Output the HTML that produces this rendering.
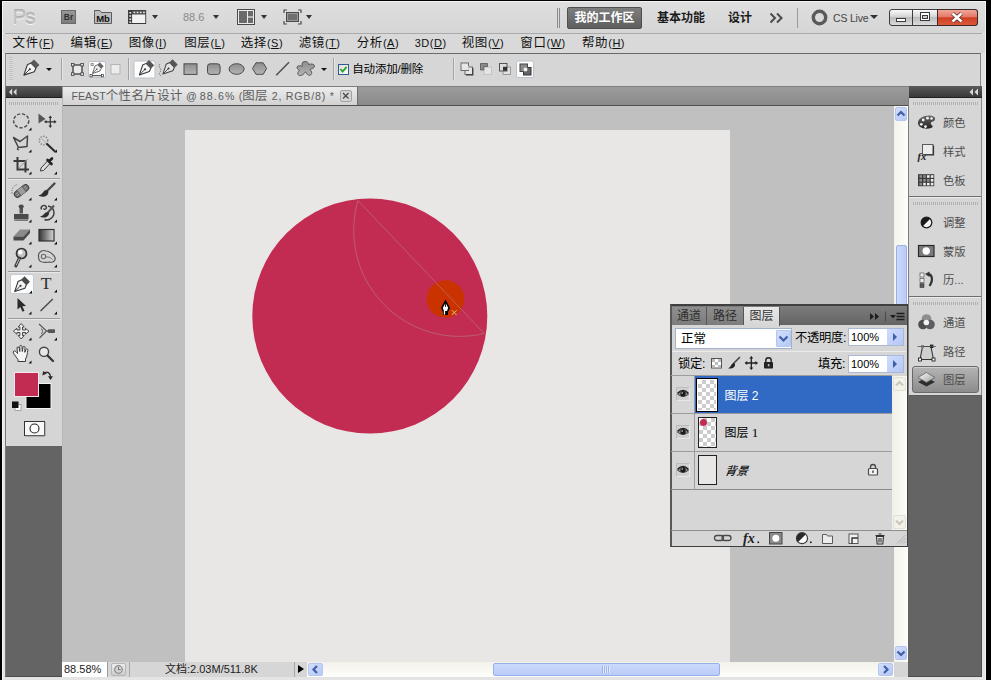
<!DOCTYPE html>
<html lang="zh-CN">
<head>
<meta charset="utf-8">
<title>Photoshop CS5 - FEAST个性名片设计</title>
<style>
html,body{margin:0;padding:0;}
body{width:991px;height:680px;overflow:hidden;background:#000;position:relative;
 font-family:"Liberation Sans","Noto Sans CJK SC",sans-serif;font-size:12px;color:#000;}
.a{position:absolute;}
#frame{left:2px;top:1px;width:984px;height:679px;background:#e4e4e4;box-sizing:border-box;border-top:1px solid #f6f6f6;border-left:1px solid #f4f4f4;border-right:1px solid #f2f2f2;}
#appbar{left:3px;top:2px;width:982px;height:31px;background:linear-gradient(#dedede,#d6d6d6);}
#appsep{left:5px;top:33px;width:977px;height:1px;background:#a9a9a9;}
#menubar{left:3px;top:34px;width:982px;height:19px;background:#d9d9d9;}
.mi{position:absolute;top:35px;height:16px;line-height:16px;font-size:12.5px;color:#111;white-space:nowrap;letter-spacing:0.6px;}
.mi u{text-decoration:underline;}
#optbar{left:5px;top:53px;width:976px;height:32px;background:#d6d6d6;border-top:1px solid #6a6a6a;border-left:1px solid #8a8a8a;border-right:1px solid #8a8a8a;box-sizing:border-box;height:33px;}
#work{left:5px;top:86px;width:977px;height:591px;background:#646464;box-sizing:border-box;border:1px solid #4e4e4e;border-top:none;border-left-color:#777;}
#tbhead{left:6px;top:86px;width:56px;height:11px;background:linear-gradient(#5a5a5a,#383838);border-bottom:1px solid #222;}
#tbbody{left:6px;top:98px;width:56px;height:348px;background:#d5d5d5;}
#tabbar{left:62px;top:86px;width:847px;height:19px;background:linear-gradient(#7e7e7e 0,#7e7e7e 1px,#9c9c9c 1px,#8a8a8a);border-bottom:1px solid #505050;box-sizing:border-box;height:20px;}
#doctab{left:63px;top:87px;width:294px;height:18px;background:linear-gradient(#ececec,#d2d2d2);border-right:1px solid #6e6e6e;font-size:12px;line-height:18px;color:#5c5c5c;white-space:nowrap;}
#paste{left:62px;top:106px;width:832px;height:556px;background:#c0c0c0;}
#canvas{left:185px;top:130px;width:545px;height:532px;background:#e8e7e5;}
#vscroll{left:894px;top:106px;width:14px;height:556px;background:linear-gradient(90deg,#f3f2ea,#fefefb);}
#status{left:62px;top:662px;width:846px;height:15px;background:#d6d6d6;}
#dockhead{left:909px;top:86px;width:73px;height:11px;background:linear-gradient(#5a5a5a,#383838);border-bottom:1px solid #222;}
#dock{left:909px;top:98px;width:73px;height:298px;background:#d6d6d6;}
.tri{width:0;height:0;border-left:3.5px solid transparent;border-right:3.5px solid transparent;border-top:4px solid #333;}
.sbtn{box-sizing:border-box;border:1px solid #b4c6f0;border-radius:2px;background:linear-gradient(135deg,#d2defc,#b6c8f6);}
.ptab{top:307px;height:18px;line-height:19px;text-align:center;font-size:12px;color:#2e2e2e;background:linear-gradient(#8f8f8f,#7c7c7c);border-right:1px solid #555;box-sizing:content-box;}
.ml{font-size:11px;letter-spacing:0.5px;}
</style>
</head>
<body>
<div class="a" id="frame"></div>
<div class="a" id="appbar"></div>
<div class="a" id="appsep"></div>
<div class="a" id="menubar"></div>
<div class="a" id="optbar"></div>
<div class="a" id="work"></div>
<div class="a" id="tbhead"></div>
<div class="a" id="tbbody"></div>
<div class="a" id="tabbar"></div>
<div class="a" id="doctab"><span id="tabtxt" style="position:absolute;left:8.500px;top:0;font-size:10.600px;"><span id="t1">FEAST</span><span id="t2" style="font-size:12.400px;letter-spacing:0.500px">个性名片设计</span><span id="t3"> @ </span><span id="t4" style="letter-spacing:1.200px">88.6%</span><span id="t5"> (</span><span style="font-size:12.400px;letter-spacing:0.500px">图层</span><span id="t6" style="letter-spacing:0.800px"> 2, RGB/8) *</span></span><span style="position:absolute;left:277.300px;top:3.300px;width:11.500px;height:11.500px;box-sizing:border-box;border:1px solid #a4a4a4;border-radius:2px;background:#d4d4d4;"></span><svg style="position:absolute;left:277.300px;top:3.300px" width="11.500" height="11.500" viewBox="0 0 11.500 11.500"><path d="M3 3 L8.500 8.500 M8.500 3 L3 8.500" stroke="#444" stroke-width="1.100"/></svg></div>
<div class="a" id="paste"></div>
<div class="a" id="canvas"></div>
<div class="a" id="vscroll"></div>
<div class="a" id="status"></div>
<div class="a" id="dockhead"></div>
<div class="a" id="dock"></div>
<svg class="a" style="left:185px;top:130px" width="545" height="532" viewBox="185 130 545 532">
<circle cx="369.8" cy="316.1" r="117.5" fill="#c32c52"/>
<circle cx="445.4" cy="299" r="18.8" fill="#ca3300"/>
<path d="M358 200.5 L484.2 333.5" fill="none" stroke="#b8707f" stroke-width="1" opacity="0.7"/>
<path d="M358 200.5 A106 106 0 0 0 484.2 333.5" fill="none" stroke="#b8707f" stroke-width="1" opacity="0.7"/>
<g id="pencur">
<path d="M445.5 299.4 L441 307.8 L442.6 311.6 L443 311.6 L443 315 L448 315 L448 311.6 L448.4 311.6 L450 307.8 Z" fill="#000"/>
<path d="M445.5 303 L442.8 307.8 L444 311 L444.8 311 L447 311 L448.2 307.8 Z" fill="#fff"/>
<path d="M445.5 300 L445.5 307" stroke="#000" stroke-width="0.8"/>
<rect x="443.8" y="311" width="1.3" height="3.6" fill="#fff"/>
<path d="M451.8 310.2 L456.6 315 M456.6 310.2 L451.8 315" stroke="#e2c08f" stroke-width="1" fill="none"/>
</g>
</svg>
<!--ARTWORK-->
<div class="a" style="left:12.500px;top:4px;font-size:20.500px;line-height:26px;color:#c0c0c0;text-shadow:0 1px 0 #f6f6f6,0 -1px 0 #adadad;letter-spacing:-1px;">Ps</div>
<div class="a" style="left:61px;top:10px;width:15px;height:14px;background:linear-gradient(#979797,#7c7c7c);border:1px solid #6a6a6a;box-sizing:border-box;font-size:8.5px;line-height:12px;text-align:center;color:#333;font-weight:bold;">Br</div>
<svg class="a" style="left:93px;top:9px" width="20" height="16" viewBox="0 0 20 16"><path d="M1.5 3.5 L1.5 1.5 L7 1.5 L8.5 3.5 L18.5 3.5 L18.5 14.5 L1.5 14.5 Z" fill="#bdbdbd" stroke="#5c5c5c" stroke-width="1"/><text x="10" y="12.5" font-size="9.5" font-weight="bold" text-anchor="middle" fill="#111" font-family="Liberation Sans, sans-serif">Mb</text></svg>
<svg class="a" style="left:128px;top:10px" width="20" height="15" viewBox="0 0 22 15" preserveAspectRatio="none"><rect x="0.5" y="0.5" width="19" height="13" fill="#f2f2f2" stroke="#3a3a3a"/><rect x="0.5" y="0.5" width="19" height="4" fill="#4a4a4a"/><rect x="0.5" y="0.5" width="4" height="13" fill="#3a3a3a"/><g fill="#e0e0e0"><rect x="1.5" y="2" width="2" height="1.6"/><rect x="1.5" y="5.2" width="2" height="1.6"/><rect x="1.5" y="8.4" width="2" height="1.6"/><rect x="1.5" y="11.4" width="2" height="1.6"/><rect x="6" y="1.6" width="2" height="1.6"/><rect x="9.5" y="1.6" width="2" height="1.6"/><rect x="13" y="1.6" width="2" height="1.6"/><rect x="16.5" y="1.6" width="2" height="1.6"/></g></svg>
<div class="a tri" style="left:152px;top:15px;"></div>
<div class="a" style="left:183px;top:10px;font-size:11px;line-height:14px;color:#8a8a8a;">88.6</div>
<div class="a tri" style="left:213px;top:15px;"></div>
<svg class="a" style="left:237px;top:9px" width="18" height="16" viewBox="0 0 18 16"><rect x="0.5" y="0.5" width="17" height="15" fill="#ececec" stroke="#4a4a4a"/><rect x="2" y="2" width="8" height="12" fill="#6a6a6a"/><rect x="11" y="2" width="5" height="5.4" fill="#6a6a6a"/><rect x="11" y="8.6" width="5" height="5.4" fill="#6a6a6a"/></svg>
<div class="a tri" style="left:261px;top:15px;"></div>
<svg class="a" style="left:283px;top:9px" width="19" height="16" viewBox="0 0 19 16"><path d="M1 4 V1 H4 M15 1 H18 V4 M18 12 V15 H15 M4 15 H1 V12" fill="none" stroke="#4a4a4a" stroke-width="1.2"/><rect x="3.5" y="3.5" width="12" height="9" fill="#9a9a9a" stroke="#4a4a4a"/><rect x="5" y="5" width="9" height="6" fill="#6e6e6e"/></svg>
<div class="a tri" style="left:306px;top:15px;"></div>
<div class="a" style="left:557px;top:8px;width:1px;height:20px;background:#8c8c8c;"></div>
<div class="a" style="left:559px;top:8px;width:1px;height:20px;background:#8c8c8c;"></div>
<div class="a" style="left:567px;top:7px;width:75px;height:22px;box-sizing:border-box;border:1px solid #4e4e4e;border-radius:2px;background:linear-gradient(#7e7e7e,#5e5e5e);color:#fff;font-weight:bold;font-size:12px;line-height:20px;text-align:center;letter-spacing:0;">我的工作区</div>
<div class="a" style="left:657px;top:8px;font-weight:bold;font-size:12px;line-height:20px;color:#1a1a1a;">基本功能</div>
<div class="a" style="left:728px;top:8px;font-weight:bold;font-size:12px;line-height:20px;color:#1a1a1a;">设计</div>
<svg class="a" style="left:769px;top:12px" width="16" height="12" viewBox="0 0 16 12"><path d="M1.5 1.5 L6 6 L1.5 10.5 M8 1.5 L12.500 6 L8 10.5" fill="none" stroke="#4a4a4a" stroke-width="2"/></svg>
<div class="a" style="left:797px;top:8px;width:1px;height:20px;background:#9a9a9a;"></div>
<svg class="a" style="left:811px;top:9px" width="18" height="18" viewBox="0 0 18 18"><circle cx="8.500" cy="8.500" r="6.2" fill="none" stroke="#5a5a5a" stroke-width="3.4"/></svg>
<div class="a" style="left:833px;top:9px;font-size:10.5px;line-height:18px;color:#444;letter-spacing:-0.2px;">CS Live</div>
<div class="a tri" style="left:870px;top:15px;border-left-width:4px;border-right-width:4px;"></div>
<div class="a" style="left:889px;top:9px;width:89px;height:17px;box-sizing:border-box;border:1px solid #3c3c3c;border-radius:3px;background:linear-gradient(#fafafa,#d4d4d4 45%,#bcbcbc 50%,#dcdcdc);"></div>
<div class="a" style="left:912px;top:9px;width:1px;height:17px;background:#3c3c3c;"></div>
<div class="a" style="left:937px;top:9px;width:41px;height:17px;box-sizing:border-box;border:1px solid #3c2a26;border-radius:0 3px 3px 0;background:linear-gradient(#f0a59a,#e57a68 45%,#cf3e22 52%,#dd5a3c);"></div>
<div class="a" style="left:896px;top:18px;width:10px;height:4px;box-sizing:border-box;border:1px solid #3a3a3a;background:#fff;"></div>
<div class="a" style="left:920px;top:12px;width:10px;height:9px;box-sizing:border-box;border:1px solid #3a3a3a;background:#fff;"></div>
<div class="a" style="left:922px;top:15px;width:6px;height:4px;box-sizing:border-box;border:1px solid #3a3a3a;background:#ccc;"></div>
<svg class="a" style="left:950px;top:11px" width="14" height="13" viewBox="0 0 14 13"><path d="M2.500 2.500 L11.500 10.500 M11.500 2.500 L2.500 10.500" stroke="#5a2a20" stroke-width="4.2" fill="none"/><path d="M2.500 2.500 L11.500 10.500 M11.500 2.500 L2.500 10.500" stroke="#fff" stroke-width="2.600" fill="none"/></svg>
<!--APPBAR-->
<div class="mi" style="left:12.6px">文件<span class="ml">(<u>F</u>)</span></div>
<div class="mi" style="left:70.6px">编辑<span class="ml">(<u>E</u>)</span></div>
<div class="mi" style="left:128.7px">图像<span class="ml">(<u>I</u>)</span></div>
<div class="mi" style="left:184.2px">图层<span class="ml">(<u>L</u>)</span></div>
<div class="mi" style="left:240.7px">选择<span class="ml">(<u>S</u>)</span></div>
<div class="mi" style="left:298.7px">滤镜<span class="ml">(<u>T</u>)</span></div>
<div class="mi" style="left:356.7px">分析<span class="ml">(<u>A</u>)</span></div>
<div class="mi" style="left:414.7px"><span class="ml">3D(<u>D</u>)</span></div>
<div class="mi" style="left:461.7px">视图<span class="ml">(<u>V</u>)</span></div>
<div class="mi" style="left:520.3px">窗口<span class="ml">(<u>W</u>)</span></div>
<div class="mi" style="left:582px">帮助<span class="ml">(<u>H</u>)</span></div>
<!--MENU-->
<div class="a" style="left:9px;top:57px;width:4px;height:24px;background:repeating-linear-gradient(#bcbcbc 0 1px,#dedede 1px 2px);opacity:.8"></div>
<svg class="a" style="left:18px;top:56px" width="26" height="26" viewBox="18 56 26 26"><g transform="translate(30.8 68.2) rotate(45) scale(1.0)"><path d="M0 9.800 L-4.900 0 L-3.500 -3.800 L3.500 -3.800 L4.900 0 Z" fill="#f4f4f4" stroke="#3a3a3a" stroke-width="1.100" stroke-linejoin="round"/><path d="M0 9 L0 2" stroke="#3a3a3a" stroke-width="0.900"/><circle cx="0" cy="1.400" r="1.100" fill="#3a3a3a"/><rect x="-3.900" y="-8.300" width="7.800" height="4.600" fill="#5a5a5a"/></g></svg>
<div class="a tri" style="left:46px;top:68px;border-left-width:3px;border-right-width:3px;border-top-width:3.5px;border-top-color:#111"></div>
<div class="a" style="left:61px;top:58px;width:1px;height:22px;background:#a2a2a2;"></div><div class="a" style="left:62px;top:58px;width:1px;height:22px;background:#e6e6e6;"></div>
<svg class="a" style="left:69px;top:60px" width="54" height="20" viewBox="69 60 54 20">
<rect x="73" y="65" width="9" height="9" fill="#e9e9e9" stroke="#3c3c3c" stroke-width="1.300"/>
<g fill="#e8e8e8" stroke="#3c3c3c" stroke-width="0.800"><rect x="71.400" y="63.400" width="2.600" height="2.600"/><rect x="80.800" y="63.400" width="2.600" height="2.600"/><rect x="71.400" y="72.800" width="2.600" height="2.600"/><rect x="80.800" y="72.800" width="2.600" height="2.600"/></g>
<rect x="88.500" y="61.500" width="17" height="16" rx="1.500" fill="#fdfdfd" stroke="#b9c3cf" stroke-width="1"/>
<g transform="translate(97.5 68.5) rotate(45) scale(0.72)"><path d="M0 9.800 L-4.900 0 L-3.500 -3.800 L3.500 -3.800 L4.900 0 Z" fill="#eee" stroke="#555" stroke-width="1.100" stroke-linejoin="round"/><path d="M0 9 L0 2" stroke="#555" stroke-width="0.900"/><circle cx="0" cy="1.400" r="1.100" fill="#555"/><rect x="-3.900" y="-8.300" width="7.800" height="4.600" fill="#666"/></g>
<path d="M91 75.700 H102.500" stroke="#333" stroke-width="1"/><rect x="90" y="74.600" width="2.200" height="2.200" fill="#fff" stroke="#333" stroke-width="0.700"/><rect x="101.400" y="74.600" width="2.200" height="2.200" fill="#fff" stroke="#333" stroke-width="0.700"/><rect x="91" y="63.500" width="2.200" height="2.200" fill="#ddd" stroke="#777" stroke-width="0.700"/>
<rect x="111" y="64.500" width="9" height="9.500" fill="#ececec" stroke="#b4b4b4" stroke-width="1"/>
</svg>
<div class="a" style="left:128px;top:58px;width:1px;height:22px;background:#a2a2a2;"></div><div class="a" style="left:129px;top:58px;width:1px;height:22px;background:#e6e6e6;"></div>
<svg class="a" style="left:132px;top:58px" width="200" height="22" viewBox="132 58 200 22">
<defs><linearGradient id="gsh" x1="0" y1="0" x2="0" y2="1"><stop offset="0" stop-color="#8e8e8e"/><stop offset="1" stop-color="#b4b4b4"/></linearGradient></defs>
<rect x="134" y="61" width="21" height="17" rx="1.500" fill="#fdfdfd" stroke="#b9c3cf" stroke-width="1"/>
<g transform="translate(146 68.3) rotate(45) scale(0.95)"><path d="M0 9.800 L-4.900 0 L-3.500 -3.800 L3.500 -3.800 L4.900 0 Z" fill="#f6f6f6" stroke="#333" stroke-width="1.100" stroke-linejoin="round"/><path d="M0 9 L0 2" stroke="#333" stroke-width="0.900"/><circle cx="0" cy="1.400" r="1.100" fill="#333"/><rect x="-3.900" y="-8.300" width="7.800" height="4.600" fill="#555"/></g><g transform="translate(169.5 67.5) rotate(45) scale(0.95)"><path d="M0 9.800 L-4.900 0 L-3.500 -3.800 L3.500 -3.800 L4.900 0 Z" fill="#e4e4e4" stroke="#444" stroke-width="1.100" stroke-linejoin="round"/><path d="M0 9 L0 2" stroke="#444" stroke-width="0.900"/><circle cx="0" cy="1.400" r="1.100" fill="#444"/><rect x="-3.900" y="-8.300" width="7.800" height="4.600" fill="#555"/></g>
<path d="M160 64 q-2 2 0 4 q2 2 0 4 q-1.500 2 1 4" fill="none" stroke="#666" stroke-width="0.900" stroke-dasharray="1.500 1"/>
<rect x="184" y="63.800" width="13" height="10.600" fill="url(#gsh)" stroke="#4a4a4a" stroke-width="1"/>
<rect x="207.500" y="63.800" width="12.600" height="10.600" rx="2.600" fill="url(#gsh)" stroke="#4a4a4a" stroke-width="1"/>
<ellipse cx="236.600" cy="69" rx="7.500" ry="5.300" fill="url(#gsh)" stroke="#4a4a4a" stroke-width="1"/>
<path d="M252.500 68.500 L256 62.800 L263.200 62.800 L266.600 68.500 L263.200 74.300 L256 74.300 Z" fill="url(#gsh)" stroke="#4a4a4a" stroke-width="1"/>
<path d="M276.200 75.300 L289 62.300" stroke="#4e4e4e" stroke-width="1.500"/>
<path d="M303 62 C306 60.500 309 62.500 308.500 64.500 C311 63.500 314.500 64 314.500 66 C314.500 68.500 311.500 68.500 310 69.500 C312 71.500 312.500 74.500 310 75.200 C307.500 75.800 306.500 73 305.500 71.800 C304.500 73.500 302 76 299.500 75.500 C297 74.800 297.500 72 299.500 70.200 C298 69.500 296.500 68.500 297.200 66.800 C298 65.200 301 65.800 302.500 66.200 C302 64.800 301.800 63 303 62 Z" fill="url(#gsh)" stroke="#5a5a5a" stroke-width="1"/>
</svg>
<div class="a tri" style="left:320.500px;top:67.500px;border-left-width:3px;border-right-width:3px;border-top-width:3.500px;border-top-color:#111"></div>
<div class="a" style="left:333px;top:58px;width:1px;height:22px;background:#a2a2a2;"></div><div class="a" style="left:334px;top:58px;width:1px;height:22px;background:#e6e6e6;"></div>
<div class="a" style="left:338px;top:64px;width:11px;height:11px;box-sizing:border-box;border:1px solid #2f5a93;background:linear-gradient(135deg,#dcdcd6,#fff);"></div>
<svg class="a" style="left:338px;top:64px" width="11" height="11" viewBox="0 0 11 11"><path d="M2.500 5 L4.600 7.600 L8.600 2.800" fill="none" stroke="#2aa12a" stroke-width="1.800"/></svg>
<div class="a" style="left:352.300px;top:61px;font-size:11.500px;line-height:16px;color:#000;white-space:nowrap;letter-spacing:-0.200px;">自动添加/删除</div>
<div class="a" style="left:453px;top:58px;width:1px;height:22px;background:#a2a2a2;"></div><div class="a" style="left:454px;top:58px;width:1px;height:22px;background:#e6e6e6;"></div>
<svg class="a" style="left:458px;top:58px" width="80" height="22" viewBox="458 58 80 22">
<g stroke="#6a6a6a" stroke-width="1" fill="#e6e6e6"><rect x="465" y="67" width="7.500" height="7.500"/><rect x="461" y="63" width="7.500" height="7.500"/><path d="M465.500 67 H468 V70" stroke="#e6e6e6" stroke-width="1.500" fill="none"/></g>
<path d="M472.800 68 V74.800 H466" fill="none" stroke="#3a3a3a" stroke-width="1.200"/>
<rect x="484" y="67" width="7.500" height="7.500" fill="#e4e4e4" stroke="#c4c4c4"/><path d="M480.500 70 V63.500 H487.500 V66.500 H483.800 V70 Z" fill="#8a8a8a" stroke="#555" stroke-width="0.800"/>
<rect x="503" y="67" width="7.500" height="7.500" fill="#e2e2e2" stroke="#9a9a9a"/><rect x="499.500" y="63.500" width="7.500" height="7.500" fill="#dcdcdc" stroke="#555"/><rect x="503" y="66.800" width="4" height="4" fill="#333"/>
<rect x="516.500" y="61" width="17" height="16.500" rx="1.500" fill="#fdfdfd" stroke="#b9c3cf" stroke-width="1"/>
<rect x="523.500" y="67.500" width="7.500" height="7.500" fill="#666" stroke="#333"/><rect x="520" y="64" width="7.500" height="7.500" fill="#8a8a8a" stroke="#444"/><rect x="523.800" y="67.800" width="3.600" height="3.600" fill="#f0f0f0"/>
</svg>
<!--OPTIONS-->
<svg class="a" style="left:8px;top:88px" width="10" height="8" viewBox="0 0 10 8"><path d="M4.200 0.500 L1 4 L4.200 7.500 Z M8.500 0.500 L5.300 4 L8.500 7.500 Z" fill="#d8d8d8"/></svg>
<div class="a" style="left:9px;top:102px;width:49px;height:3px;background-image:linear-gradient(90deg,#a4a4a4 1px,transparent 1px);background-size:2px 1px;opacity:.75"></div>
<div class="a" style="left:8px;top:178px;width:52px;height:1px;background:#9a9a9a;"></div><div class="a" style="left:8px;top:179px;width:52px;height:1px;background:#e8e8e8;"></div>
<div class="a" style="left:8px;top:271px;width:52px;height:1px;background:#9a9a9a;"></div><div class="a" style="left:8px;top:272px;width:52px;height:1px;background:#e8e8e8;"></div>
<div class="a" style="left:8px;top:318px;width:52px;height:1px;background:#9a9a9a;"></div><div class="a" style="left:8px;top:319px;width:52px;height:1px;background:#e8e8e8;"></div>
<div class="a" style="left:62px;top:98px;width:1px;height:348px;background:#b6b6b6;"></div>
<div class="a" style="left:9.500px;top:273.500px;width:24px;height:20.500px;box-sizing:border-box;border:1px solid #c4ccd6;border-radius:2px;background:#fdfdfd;"></div>
<svg class="a" style="left:5px;top:98px" width="57" height="348" viewBox="5 98 57 348">
<defs><linearGradient id="tg1" x1="0" y1="0" x2="1" y2="0"><stop offset="0" stop-color="#333"/><stop offset="1" stop-color="#d8d8d8"/></linearGradient>
<linearGradient id="tg2" x1="0" y1="0" x2="0" y2="1"><stop offset="0" stop-color="#9a9a9a"/><stop offset="1" stop-color="#444"/></linearGradient></defs>
<!-- elliptical marquee -->
<ellipse cx="21.200" cy="120.800" rx="7.600" ry="7" fill="none" stroke="#4a4a4a" stroke-width="1.400" stroke-dasharray="3.200 1.800"/>
<!-- move -->
<path d="M38.500 113.500 L38.500 123.500 L45.500 119 Z" fill="#555"/><path d="M50.300 116.500 V127 M45 121.800 H55.600" stroke="#333" stroke-width="1.200"/><path d="M50.300 115.500 L48.500 118 H52.100 Z M50.300 128 L48.500 125.500 H52.100 Z M44 121.800 L46.500 120 V123.600 Z M56.600 121.800 L54.100 120 V123.600 Z" fill="#333"/>
<!-- polygonal lasso -->
<path d="M13.500 137.500 L20 141.500 L27.500 136 L27 146.500 L18.500 147.500 Z" fill="none" stroke="#444" stroke-width="1.500" stroke-linejoin="round"/><path d="M18.500 147.500 C16.500 148.500 17.500 150.500 19 149.500" fill="none" stroke="#444" stroke-width="1.200"/>
<!-- magic wand -->
<circle cx="43.500" cy="140.500" r="4.200" fill="none" stroke="#8a8a8a" stroke-width="1.600" stroke-dasharray="1.400 1.300"/><path d="M46.500 143.500 L55 151.500" stroke="#2a2a2a" stroke-width="2.200"/><path d="M41.500 138.500 L45.500 142.500" stroke="#bbb" stroke-width="1.200"/>
<!-- crop -->
<path d="M17.500 157 V169.500 H29 M13.500 161 H25.500 V172.500" fill="none" stroke="#3a3a3a" stroke-width="2"/><path d="M19 168 L27.500 159" stroke="#999" stroke-width="1"/>
<!-- eyedropper -->
<path d="M40.500 171 L41 168 L48 160.500 L50.500 163 L43.500 170.500 Z" fill="#ddd" stroke="#3a3a3a" stroke-width="1"/><path d="M47.500 160 L51.500 164 M49 161.500 L52 158.500" stroke="#222" stroke-width="2.600" stroke-linecap="round"/>
<!-- healing brush -->
<g transform="translate(21.500 191) rotate(-38)"><rect x="-8.500" y="-3.300" width="17" height="6.600" rx="3.300" fill="#6a6a6a" stroke="#3a3a3a" stroke-width="0.800"/><rect x="-2.800" y="-3.300" width="5.600" height="6.600" fill="#9c9c9c"/><path d="M-6.500 -1 H-4 M-6.500 1 H-4 M4 -1 H6.500 M4 1 H6.500" stroke="#ccc" stroke-width="0.700"/></g><path d="M12 193.500 C11.500 188.500 13.500 185.500 17.500 184.500" fill="none" stroke="#777" stroke-width="1" stroke-dasharray="1.200 1.200"/>
<!-- brush -->
<path d="M54.500 183.500 L46 192" stroke="#4a4a4a" stroke-width="2.400" stroke-linecap="round"/><path d="M47.500 190 C49.500 192 48 196 44.500 196.500 C42 197 39.500 196.500 38.500 195.500 C41.500 195 43 192.500 44.500 190.500 Z" fill="#2e2e2e"/>
<!-- stamp -->
<path d="M19.500 206 H23 V213.500 H19.500 Z" fill="#555"/><ellipse cx="21.200" cy="206.500" rx="2.600" ry="2" fill="#4a4a4a"/><path d="M14 214 H28.500 V219.500 H14 Z" fill="#4a4a4a"/><path d="M14.500 220.500 H28" stroke="#777" stroke-width="1"/>
<!-- history brush -->
<path d="M41.500 209.500 C40 206.500 44 204 46 206.500 C47.500 208.500 44.500 210.500 43.500 208.500 M48 206 C54 207 56 214 51.500 218 C49.500 219.800 46.500 220.300 44.500 219.500" fill="none" stroke="#3a3a3a" stroke-width="1.400"/><path d="M54 205.500 L47.500 213" stroke="#555" stroke-width="2"/><path d="M48.500 212 C50 214 48 217 45 217.500 C43 217.800 41 217.300 40 216.500 C42.500 216 44 214 45.500 212.500 Z" fill="#2e2e2e"/>
<!-- eraser -->
<path d="M13.500 236.500 L20 229.500 L30 229.500 L23.500 236.500 Z" fill="#8a8a8a"/><path d="M13.500 236.500 L23.500 236.500 L30 229.500 L30 233 L23.500 240.500 L13.500 240.500 Z" fill="#4a4a4a"/>
<!-- gradient -->
<rect x="39" y="229.500" width="15" height="11.500" fill="url(#tg1)" stroke="#333" stroke-width="1.200"/>
<!-- dodge -->
<circle cx="21.500" cy="253.500" r="5" fill="#c2c2c2" stroke="#333" stroke-width="1.700"/><circle cx="20.300" cy="252.200" r="2.300" fill="#fafafa"/><path d="M19.500 258 L15.800 266" stroke="#3c3c3c" stroke-width="3" stroke-linecap="round"/><path d="M19.300 258.600 L16.200 265.300" stroke="#cfcfcf" stroke-width="0.900"/>
<!-- sponge -->
<path d="M38.500 256 C38 252 42.500 249.500 46 251 C49.500 251 53.500 254.500 55 257.500 C56 260.500 53 263 50 262 C46 262.500 41.500 263 39.500 260.500 C38.500 259.500 38.500 257.500 38.500 256 Z" fill="#d4d4d4" stroke="#555" stroke-width="1.200"/><circle cx="43.500" cy="256.500" r="2.200" fill="none" stroke="#666" stroke-width="1.100"/><path d="M46 257 C49 256.500 51 258 52.500 259.500" fill="none" stroke="#777" stroke-width="1"/>
<!-- pen (selected) -->
<g transform="translate(21.500 284.800) rotate(45) scale(0.98)"><path d="M0 9.800 L-4.900 0 L-3.500 -3.800 L3.500 -3.800 L4.900 0 Z" fill="#f2f2f2" stroke="#333" stroke-width="1.100" stroke-linejoin="round"/><path d="M0 9 L0 2" stroke="#333" stroke-width="0.900"/><circle cx="0" cy="1.400" r="1.100" fill="#333"/><rect x="-3.900" y="-8.300" width="7.800" height="4.600" fill="#4a4a4a"/></g>
<!-- type -->
<text x="46.200" y="288.600" font-family="Liberation Serif, serif" font-size="17.500" text-anchor="middle" fill="#2e2e2e">T</text>
<!-- path selection arrow -->
<path d="M17.500 298 L17.500 309.500 L20.300 307 L22.500 311.800 L24.500 310.800 L22.300 306.200 L26 306 Z" fill="#2a2a2a"/>
<!-- line -->
<path d="M40.500 311 L52.800 299" stroke="#4e4e4e" stroke-width="1.500"/>
<!-- 3d object rotate (4 arrows outline) -->
<path d="M21.200 323.500 L24.200 327 H22.500 V330 H25.500 V328.300 L29 331.200 L25.500 334.200 V332.500 H22.500 V335.500 H24.200 L21.200 339 L18.200 335.500 H19.900 V332.500 H16.900 V334.200 L13.400 331.200 L16.900 328.300 V330 H19.900 V327 H18.200 Z" fill="#f0f0f0" stroke="#444" stroke-width="1"/>
<!-- 3d camera -->
<path d="M39 324 L46.500 331 L39.500 338" fill="none" stroke="#555" stroke-width="1.100"/><path d="M41 328.500 C43 330 43 332.500 41 334" fill="none" stroke="#555" stroke-width="1"/><rect x="48" y="329.300" width="7" height="3.600" rx="0.800" fill="#555"/><path d="M46.500 331.100 H49" stroke="#555" stroke-width="1.600"/>
<!-- hand -->
<path d="M15.500 356 C13.500 353.500 12.500 352 13.800 351 C15.200 350.300 16.500 352 17.500 353.500 L17 348 C17 346.500 19 346.500 19.200 348 L19.800 351.500 L19.800 346.500 C19.800 345 21.800 345 22 346.500 L22.300 351.500 L23 347.300 C23.300 345.900 25.200 346.200 25 347.600 L24.800 352.300 L26 349.500 C26.600 348.300 28.300 349 27.800 350.300 C27 353 27.500 356.500 25.500 359 L25.500 361.500 H18 L18 359.500 C17 358.500 16.300 357.200 15.500 356 Z" fill="#f4f4f4" stroke="#3a3a3a" stroke-width="1" stroke-linejoin="round"/>
<!-- zoom -->
<circle cx="44" cy="351.800" r="4.600" fill="#e8e8e8" stroke="#444" stroke-width="1.400"/><path d="M47.500 355.500 L53 361" stroke="#333" stroke-width="2.200" stroke-linecap="round"/>
<!-- corner triangles -->
<path d="M31.5 127.5 V130.5 H28.5 Z" fill="#111"/><path d="M31.5 149.5 V152.5 H28.5 Z" fill="#111"/><path d="M57 149.5 V152.5 H54 Z" fill="#111"/><path d="M31.5 171.5 V174.5 H28.5 Z" fill="#111"/><path d="M57 171.5 V174.5 H54 Z" fill="#111"/><path d="M31.5 197.5 V200.5 H28.5 Z" fill="#111"/><path d="M57 197.5 V200.5 H54 Z" fill="#111"/><path d="M31.5 219.5 V222.5 H28.5 Z" fill="#111"/><path d="M57 219.5 V222.5 H54 Z" fill="#111"/><path d="M31.5 241.5 V244.5 H28.5 Z" fill="#111"/><path d="M57 241.5 V244.5 H54 Z" fill="#111"/><path d="M31.5 264.5 V267.5 H28.5 Z" fill="#111"/><path d="M57 264.5 V267.5 H54 Z" fill="#111"/><path d="M32 290.5 V293.5 H29 Z" fill="#111"/><path d="M57 289.5 V292.5 H54 Z" fill="#111"/><path d="M31.5 311.5 V314.5 H28.5 Z" fill="#111"/><path d="M57 311.5 V314.5 H54 Z" fill="#111"/><path d="M31.5 337.5 V340.5 H28.5 Z" fill="#111"/><path d="M57 337.5 V340.5 H54 Z" fill="#111"/><path d="M31.5 360.5 V363.5 H28.5 Z" fill="#111"/>
<!-- swap arrows -->
<path d="M44 373.500 C47 370.500 50.500 373 50.500 377" fill="none" stroke="#2a2a2a" stroke-width="1.300"/><path d="M42.300 375.500 L43.200 371 L47 373.500 Z M48 376.300 H53 L50.500 380 Z" fill="#2a2a2a"/>
<!-- background / foreground -->
<rect x="26" y="383.500" width="25" height="25" fill="#000" stroke="#f2f2f2" stroke-width="1"/>
<rect x="14.500" y="372.500" width="24" height="24" fill="#c32c52" stroke="#f6e6ea" stroke-width="1"/>
<!-- default colors -->
<rect x="15" y="404.500" width="6" height="6" fill="#fff" stroke="#777" stroke-width="0.600"/><rect x="12" y="401.500" width="6.500" height="6.500" fill="#111"/>
<!-- quick mask -->
<rect x="24.500" y="421.500" width="20" height="14" fill="#f8f8f8" stroke="#333" stroke-width="1"/><path d="M25 436 H45 V422" fill="none" stroke="#888" stroke-width="1"/><circle cx="34.500" cy="428.500" r="4.500" fill="#fff" stroke="#222" stroke-width="1.100"/>
</svg>
<!--TOOLS-->
<div class="a" style="left:908px;top:98px;width:1px;height:298px;background:#7c7c7c;"></div><div class="a" style="left:981px;top:98px;width:1px;height:298px;background:#8a8a8a;"></div>
<svg class="a" style="left:968px;top:88px" width="12" height="8" viewBox="0 0 12 8"><path d="M5 0.500 L1.500 4 L5 7.500 Z M10 0.500 L6.500 4 L10 7.500 Z" fill="#d8d8d8"/></svg>
<div class="a" style="left:913px;top:102px;width:65px;height:3px;background-image:linear-gradient(90deg,#a4a4a4 1px,transparent 1px);background-size:2px 1px;background-repeat:repeat;opacity:.75"></div>
<div class="a" style="left:909px;top:196px;width:72px;height:1px;background:#6e6e6e;"></div><div class="a" style="left:909px;top:197px;width:72px;height:1px;background:#ececec;"></div>
<div class="a" style="left:913px;top:202px;width:65px;height:3px;background-image:linear-gradient(90deg,#a4a4a4 1px,transparent 1px);background-size:2px 1px;background-repeat:repeat;opacity:.75"></div>
<div class="a" style="left:909px;top:296px;width:72px;height:1px;background:#6e6e6e;"></div><div class="a" style="left:909px;top:297px;width:72px;height:1px;background:#ececec;"></div>
<div class="a" style="left:913px;top:302px;width:65px;height:3px;background-image:linear-gradient(90deg,#a4a4a4 1px,transparent 1px);background-size:2px 1px;background-repeat:repeat;opacity:.75"></div>
<div class="a" style="left:909px;top:395px;width:73px;height:1px;background:#5a5a5a;"></div>
<div class="a" style="left:912px;top:366px;width:67px;height:27px;box-sizing:border-box;border:1px solid #6a6a6a;border-radius:3px;background:linear-gradient(#b4b4b4,#8c8c8c);box-shadow:inset 0 1px 0 #cfcfcf;"></div>
<div class="a" style="left:943px;top:115px;font-size:11.300px;line-height:16px;color:#4e4e4e;white-space:nowrap;">颜色</div>
<div class="a" style="left:943px;top:144px;font-size:11.300px;line-height:16px;color:#4e4e4e;white-space:nowrap;">样式</div>
<div class="a" style="left:943px;top:173px;font-size:11.300px;line-height:16px;color:#4e4e4e;white-space:nowrap;">色板</div>
<div class="a" style="left:943px;top:215px;font-size:11.300px;line-height:16px;color:#4e4e4e;white-space:nowrap;">调整</div>
<div class="a" style="left:943px;top:243.5px;font-size:11.300px;line-height:16px;color:#4e4e4e;white-space:nowrap;">蒙版</div>
<div class="a" style="left:943px;top:272px;font-size:11.300px;line-height:16px;color:#4e4e4e;white-space:nowrap;">历...</div>
<div class="a" style="left:943px;top:315px;font-size:11.300px;line-height:16px;color:#4e4e4e;white-space:nowrap;">通道</div>
<div class="a" style="left:943px;top:343.5px;font-size:11.300px;line-height:16px;color:#4e4e4e;white-space:nowrap;">路径</div>
<div class="a" style="left:943px;top:372px;font-size:11.300px;line-height:16px;color:#4e4e4e;white-space:nowrap;">图层</div>
<svg class="a" style="left:909px;top:98px" width="34" height="298" viewBox="909 98 34 298">
<defs><linearGradient id="gd" x1="0" y1="0" x2="0" y2="1"><stop offset="0" stop-color="#6a6a6a"/><stop offset="1" stop-color="#222"/></linearGradient>
<linearGradient id="gl" x1="0" y1="0" x2="1" y2="1"><stop offset="0" stop-color="#fff"/><stop offset="1" stop-color="#9a9a9a"/></linearGradient></defs>
<!-- palette -->
<path d="M918 123.500 C917.500 118.500 924 115.200 930 115.600 C934.500 116 936 118.500 934.500 120.500 C933.200 122 930.800 121.500 930.800 123.500 C930.800 125.300 933.500 125.500 932.500 127 C930.500 129.500 919 129.800 918 123.500 Z" fill="url(#gd)"/>
<g fill="#f2f2f2"><circle cx="921.300" cy="124.300" r="1.400"/><circle cx="923.200" cy="120" r="1.400"/><circle cx="927.500" cy="118.200" r="1.400"/><circle cx="931.500" cy="118.500" r="1.300"/><circle cx="925.500" cy="126.600" r="1.400"/></g>
<!-- styles -->
<rect x="922.500" y="144.500" width="10.500" height="10" fill="#ececec" stroke="#5a5a5a" stroke-width="1"/><path d="M933.500 145.500 V155 H924" fill="none" stroke="#333" stroke-width="1.200"/>
<text x="917.500" y="159.600" font-family="Liberation Serif, serif" font-style="italic" font-weight="bold" font-size="10.500" fill="#1a1a1a">fx</text>
<!-- swatches -->
<rect x="918" y="174.200" width="16.200" height="12" fill="#3a3a3a"/>
<g fill="#eee"><rect x="927" y="175.200" width="2.600" height="2.600"/><rect x="930.800" y="175.200" width="2.600" height="2.600"/><rect x="930.800" y="179" width="2.600" height="2.600"/><rect x="923.200" y="182.800" width="2.600" height="2.600"/><rect x="927" y="182.800" width="2.600" height="2.600"/><rect x="930.800" y="182.800" width="2.600" height="2.600"/></g>
<g fill="#8a8a8a"><rect x="919.400" y="175.200" width="2.600" height="2.600"/><rect x="923.200" y="175.200" width="2.600" height="2.600"/><rect x="919.400" y="179" width="2.600" height="2.600"/><rect x="923.200" y="179" width="2.600" height="2.600"/><rect x="927" y="179" width="2.600" height="2.600"/><rect x="919.400" y="182.800" width="2.600" height="2.600"/></g>
<!-- adjustments -->
<circle cx="926.500" cy="222.500" r="5.300" fill="#f4f4f4" stroke="#222" stroke-width="1.300"/><path d="M922.750 226.250 A5.300 5.300 0 0 1 930.250 218.750 Z" fill="#1a1a1a"/>
<!-- masks -->
<rect x="918.500" y="245.500" width="15.500" height="11" fill="#7a7a7a" stroke="#2a2a2a" stroke-width="1.200"/><circle cx="926.200" cy="251" r="3.700" fill="#fff"/>
<!-- history -->
<g fill="#555" stroke="#444" stroke-width="0.600"><rect x="920" y="273" width="4" height="4" fill="#eee"/><rect x="920" y="278.300" width="4" height="4" fill="#eee"/><rect x="920" y="283.600" width="4" height="4"/></g>
<path d="M927 274.200 C932.500 273.500 933.500 280 929.500 286" fill="none" stroke="#333" stroke-width="2.200"/><path d="M925 274 L929.500 271.500 L929.500 277 Z" fill="#333"/>
<!-- channels -->
<circle cx="926.500" cy="319" r="4.800" fill="#8e8e8e"/><circle cx="923" cy="324.500" r="4.800" fill="#4e4e4e"/><circle cx="930" cy="324.500" r="4.800" fill="#5e5e5e"/><circle cx="926.300" cy="322.500" r="2.800" fill="#f2f2f2"/>
<!-- paths -->
<path d="M920 359.500 C921.500 352 922 349.500 922.500 346.500 H931 C931.500 349.500 932 352 933.500 359.500 Z" fill="#cfcfcf" stroke="#333" stroke-width="1.100"/>
<g fill="#fff" stroke="#222" stroke-width="0.900"><rect x="918.500" y="358" width="3" height="3"/><rect x="932" y="358" width="3" height="3"/></g><rect x="921" y="345" width="3" height="3" fill="#888"/><rect x="930" y="344.600" width="3.400" height="3.400" fill="#222"/><path d="M917.500 346.500 H936" stroke="#555" stroke-width="0.800"/>
<!-- layers -->
<path d="M926.500 377.500 L935 382 L926.500 386.500 L918 382 Z" fill="#2e2e2e"/><path d="M926.500 372.500 L935 377.500 L926.500 382.500 L918 377.500 Z" fill="url(#gl)" stroke="#555" stroke-width="0.700"/>
</svg>
<!--DOCK-->
<div class="a" style="left:62px;top:662px;width:46px;height:15px;background:#fff;border-right:1px solid #9a9a9a;box-sizing:border-box;font-size:11px;line-height:15px;color:#222;padding-left:2px;">88.58%</div>
<div class="a" style="left:111px;top:663px;width:15px;height:13px;box-sizing:border-box;border:1px solid #b6b6b6;border-radius:2px;background:linear-gradient(#eee,#ccc);"></div>
<svg class="a" style="left:113px;top:664px" width="11" height="11" viewBox="0 0 11 11"><circle cx="5.500" cy="5.500" r="3.800" fill="#d8d8d8" stroke="#8a8a8a" stroke-width="1.200"/><path d="M5.500 3 V5.800 H7.800" fill="none" stroke="#777" stroke-width="1.100"/></svg>
<div class="a" style="left:129px;top:662px;width:1px;height:15px;background:#a8a8a8;"></div>
<div class="a" style="left:165px;top:662px;font-size:11px;line-height:15px;color:#222;white-space:nowrap;letter-spacing:0;">文档:2.03M/511.8K</div>
<div class="a" style="left:294px;top:662px;width:1px;height:15px;background:#a8a8a8;"></div>
<div class="a" style="left:298px;top:665px;width:0;height:0;border-top:4.500px solid transparent;border-bottom:4.500px solid transparent;border-left:6px solid #000;"></div>
<div class="a" style="left:307px;top:662px;width:587px;height:15px;background:linear-gradient(#f3f2ea,#fefefb);"></div>
<div class="a sbtn" style="left:308px;top:663px;width:15px;height:13px;"></div>
<svg class="a" style="left:308px;top:663px" width="15" height="13" viewBox="0 0 15 13"><path d="M9 3 L5.500 6.500 L9 10" fill="none" stroke="#3f5fa8" stroke-width="2.200"/></svg>
<div class="a sbtn" style="left:878px;top:663px;width:15px;height:13px;"></div>
<svg class="a" style="left:878px;top:663px" width="15" height="13" viewBox="0 0 15 13"><path d="M6 3 L9.500 6.500 L6 10" fill="none" stroke="#3f5fa8" stroke-width="2.200"/></svg>
<div class="a" style="left:493px;top:663px;width:227px;height:13px;box-sizing:border-box;border:1px solid #98b0e8;border-radius:2px;background:linear-gradient(#cbd9fc,#b9cbf7);"></div>
<div class="a" style="left:602px;top:666px;width:8px;height:7px;background:repeating-linear-gradient(90deg,#9db4ea 0 1px,#e4ecff 1px 2px);"></div>
<div class="a" style="left:894px;top:662px;width:14px;height:15px;background:#d6d6d6;"></div>
<div class="a sbtn" style="left:895px;top:107px;width:12px;height:14px;"></div>
<svg class="a" style="left:895px;top:107px" width="12" height="14" viewBox="0 0 12 14"><path d="M2.500 8.500 L6 5 L9.500 8.500" fill="none" stroke="#3f5fa8" stroke-width="2.200"/></svg>
<div class="a sbtn" style="left:895px;top:646px;width:12px;height:14px;"></div>
<svg class="a" style="left:895px;top:646px" width="12" height="14" viewBox="0 0 12 14"><path d="M2.500 5.500 L6 9 L9.500 5.500" fill="none" stroke="#3f5fa8" stroke-width="2.200"/></svg>
<div class="a" style="left:895.500px;top:245px;width:11px;height:200px;box-sizing:border-box;border:1px solid #98b0e8;border-radius:2px;background:linear-gradient(90deg,#cbd9fc,#b9cbf7);"></div>
<div class="a" style="left:670px;top:304px;width:238px;height:243px;background:#d6d6d6;border:1px solid #3e3e3e;border-left:2px solid #585858;border-top:2px solid #404040;box-sizing:border-box;"></div>
<div class="a" style="left:672px;top:306px;width:235px;height:19px;background:linear-gradient(#7c7c7c,#646464);"></div>
<div class="a ptab" style="left:672px;width:34px;">通道</div>
<div class="a ptab" style="left:707px;width:36px;">路径</div>
<div class="a ptab" style="left:744px;width:35px;background:linear-gradient(#e8e8e8,#d6d6d6);color:#333;height:19px;border-right:1px solid #555;">图层</div>
<svg class="a" style="left:868px;top:311px" width="40" height="12" viewBox="868 311 40 12"><path d="M870 313 L874 316.500 L870 320 Z M875 313 L879 316.500 L875 320 Z" fill="#1e1e1e"/><path d="M885.500 311.500 V321.500" stroke="#4a4a4a" stroke-width="1"/><path d="M890 315 L896 315 L893 318.500 Z" fill="#1e1e1e"/><path d="M896.500 313.500 H904.500 M896.500 316.500 H904.500 M896.500 319.500 H904.500" stroke="#1e1e1e" stroke-width="1.300"/></svg>
<div class="a" style="left:675px;top:328px;width:117px;height:21px;box-sizing:border-box;border:1px solid #9fb2cc;background:#fff;font-size:12.500px;line-height:21px;padding-left:5px;color:#000;">正常</div>
<div class="a sbtn" style="left:776px;top:330px;width:15px;height:17px;border-radius:1px;"></div>
<svg class="a" style="left:776px;top:330px" width="15" height="17" viewBox="0 0 15 17"><path d="M3.500 6.500 L7.500 10.500 L11.500 6.500" fill="none" stroke="#3f5fa8" stroke-width="2.200"/></svg>
<div class="a" style="left:795px;top:329px;font-size:12.300px;line-height:18px;color:#000;white-space:nowrap;letter-spacing:-0.300px;">不透明度:</div>
<div class="a" style="left:848px;top:328px;width:56px;height:18px;box-sizing:border-box;border:1px solid #a9b9d6;background:#fff;font-size:11px;line-height:16px;padding-left:2px;color:#000;">100%</div>
<div class="a" style="left:887px;top:329px;width:16px;height:16px;background:linear-gradient(135deg,#cfdcfd,#b4c7f6);"></div>
<svg class="a" style="left:887px;top:329px" width="16" height="16" viewBox="0 0 16 16"><path d="M6 4 L10 8 L6 12 Z" fill="#3f5fa8"/></svg>
<div class="a" style="left:672px;top:351px;width:234px;height:1px;background:#ececec;"></div>
<div class="a" style="left:678px;top:355px;font-size:12.300px;line-height:18px;color:#000;white-space:nowrap;letter-spacing:-0.300px;">锁定:</div>
<svg class="a" style="left:708px;top:355px" width="70" height="16" viewBox="708 355 70 16">
<rect x="711.500" y="358.500" width="10" height="9.500" fill="#fff" stroke="#555" stroke-width="1"/><rect x="712" y="359" width="3" height="3" fill="#bbb"/><rect x="718" y="359" width="3" height="3" fill="#bbb"/><rect x="715" y="362" width="3" height="3" fill="#bbb"/><rect x="712" y="365" width="3" height="2.500" fill="#bbb"/><rect x="718" y="365" width="3" height="2.500" fill="#bbb"/>
<path d="M740 357 L733.500 363.500" stroke="#444" stroke-width="1.600"/><path d="M733.800 363 C731 363.500 731.500 367 728 368.300 C731.500 369.300 735.500 367.500 735 364 Z" fill="#222"/>
<path d="M751.300 357 V369 M745.500 363 H757.200" stroke="#222" stroke-width="1.300"/><path d="M751.300 356 L749.300 358.600 H753.300 Z M751.300 370 L749.300 367.400 H753.300 Z M744.600 363 L747.200 361 V365 Z M758 363 L755.400 361 V365 Z" fill="#222"/>
<rect x="764" y="362" width="9" height="6.500" rx="0.800" fill="#222"/><path d="M765.800 362 V360.500 A2.700 2.700 0 0 1 771.200 360.500 V362" fill="none" stroke="#222" stroke-width="1.400"/><rect x="767.800" y="364" width="1.600" height="2.400" fill="#bbb"/>
</svg>
<div class="a" style="left:818px;top:355px;font-size:12.300px;line-height:18px;color:#000;white-space:nowrap;letter-spacing:-0.300px;">填充:</div>
<div class="a" style="left:848px;top:355px;width:56px;height:18px;box-sizing:border-box;border:1px solid #a9b9d6;background:#fff;font-size:11px;line-height:16px;padding-left:2px;color:#000;">100%</div>
<div class="a" style="left:887px;top:356px;width:16px;height:16px;background:linear-gradient(135deg,#cfdcfd,#b4c7f6);"></div>
<svg class="a" style="left:887px;top:356px" width="16" height="16" viewBox="0 0 16 16"><path d="M6 4 L10 8 L6 12 Z" fill="#3f5fa8"/></svg>
<div class="a" style="left:671px;top:375px;width:221px;height:1px;background:#9c9c9c;"></div>
<div class="a" style="left:695px;top:376px;width:197px;height:37px;background:#316ac5;"></div>
<div class="a" style="left:671px;top:413px;width:221px;height:1px;background:#9c9c9c;"></div>
<div class="a" style="left:671px;top:451px;width:221px;height:1px;background:#9c9c9c;"></div>
<div class="a" style="left:671px;top:489px;width:221px;height:1px;background:#8c8c8c;"></div>
<div class="a" style="left:694px;top:376px;width:1px;height:114px;background:#9c9c9c;"></div>
<div class="a" style="left:676px;top:387px;width:14px;height:14px;box-sizing:border-box;border:1px solid #bcbcbc;border-right-color:#e8e8e8;border-bottom-color:#e8e8e8;background:#d0d0d0;"></div><svg class="a" style="left:676px;top:387px" width="14" height="14" viewBox="0 0 14 14"><path d="M1.500 7.200 Q7 1.500 12.500 7.200 Q7 11.500 1.500 7.200 Z" fill="#9a9a9a" stroke="#3a3a3a" stroke-width="0.900"/><circle cx="7" cy="6.900" r="2.700" fill="#1a1a1a"/><circle cx="6.200" cy="6" r="0.800" fill="#ddd"/><path d="M1.500 6.200 Q7 0.800 12.500 6.200" fill="none" stroke="#222" stroke-width="1.200"/></svg>
<div class="a" style="left:676px;top:425px;width:14px;height:14px;box-sizing:border-box;border:1px solid #bcbcbc;border-right-color:#e8e8e8;border-bottom-color:#e8e8e8;background:#d0d0d0;"></div><svg class="a" style="left:676px;top:425px" width="14" height="14" viewBox="0 0 14 14"><path d="M1.500 7.200 Q7 1.500 12.500 7.200 Q7 11.500 1.500 7.200 Z" fill="#9a9a9a" stroke="#3a3a3a" stroke-width="0.900"/><circle cx="7" cy="6.900" r="2.700" fill="#1a1a1a"/><circle cx="6.200" cy="6" r="0.800" fill="#ddd"/><path d="M1.500 6.200 Q7 0.800 12.500 6.200" fill="none" stroke="#222" stroke-width="1.200"/></svg>
<div class="a" style="left:676px;top:463px;width:14px;height:14px;box-sizing:border-box;border:1px solid #bcbcbc;border-right-color:#e8e8e8;border-bottom-color:#e8e8e8;background:#d0d0d0;"></div><svg class="a" style="left:676px;top:463px" width="14" height="14" viewBox="0 0 14 14"><path d="M1.500 7.200 Q7 1.500 12.500 7.200 Q7 11.500 1.500 7.200 Z" fill="#9a9a9a" stroke="#3a3a3a" stroke-width="0.900"/><circle cx="7" cy="6.900" r="2.700" fill="#1a1a1a"/><circle cx="6.200" cy="6" r="0.800" fill="#ddd"/><path d="M1.500 6.200 Q7 0.800 12.500 6.200" fill="none" stroke="#222" stroke-width="1.200"/></svg>
<div class="a" style="left:696px;top:378px;width:22px;height:34px;box-sizing:border-box;border:1px solid #000;background:#fff;"></div>
<div class="a" style="left:698px;top:380px;width:18px;height:30px;background-color:#fff;background-image:linear-gradient(45deg,#ccc 25%,transparent 25%,transparent 75%,#ccc 75%),linear-gradient(45deg,#ccc 25%,transparent 25%,transparent 75%,#ccc 75%);background-size:8px 8px;background-position:0 0,4px 4px;"></div>
<div class="a" style="left:698px;top:417px;width:19px;height:31px;box-sizing:border-box;border:1px solid #222;background-color:#fff;background-image:linear-gradient(45deg,#ccc 25%,transparent 25%,transparent 75%,#ccc 75%),linear-gradient(45deg,#ccc 25%,transparent 25%,transparent 75%,#ccc 75%);background-size:8px 8px;background-position:0 0,4px 4px;"></div>
<div class="a" style="left:700px;top:419px;width:7px;height:7px;border-radius:50%;background:#c32c52;"></div>
<div class="a" style="left:698px;top:454.500px;width:19px;height:30.500px;box-sizing:border-box;border:1px solid #222;background:#e8e7e5;"></div>
<div class="a" style="left:724.500px;top:387px;font-size:12px;line-height:18px;color:#fff;white-space:nowrap;">图层 2</div>
<div class="a" style="left:724.500px;top:424px;font-size:12px;line-height:18px;color:#000;white-space:nowrap;">图层 <span style="font-family:'Liberation Serif',serif;font-size:13px">1</span></div>
<div class="a" style="left:725px;top:462px;font-size:11.500px;line-height:18px;color:#111;white-space:nowrap;font-style:italic;font-weight:500;transform:skewX(-8deg);">背景</div>
<svg class="a" style="left:867px;top:463px" width="12" height="13" viewBox="0 0 12 13"><rect x="1.500" y="5.500" width="9" height="6.500" rx="1" fill="#f4f4f4" stroke="#4a4a4a" stroke-width="1.200"/><path d="M3.500 5.500 V4 A2.500 2.500 0 0 1 8.500 4 V5.500" fill="none" stroke="#4a4a4a" stroke-width="1.300"/><rect x="5.200" y="7.500" width="1.600" height="2.400" fill="#555"/></svg>
<div class="a" style="left:892px;top:376px;width:15px;height:154px;background:linear-gradient(90deg,#f1f0e7,#fdfdfa);"></div>
<div class="a" style="left:893px;top:377px;width:13px;height:14px;box-sizing:border-box;border:1px solid #e2e1d6;border-radius:2px;background:#f3f2ea;"></div>
<svg class="a" style="left:893px;top:377px" width="13" height="14" viewBox="0 0 13 14"><path d="M3 8.500 L6.500 5 L10 8.500" fill="none" stroke="#c9c7ba" stroke-width="2"/></svg>
<div class="a" style="left:893px;top:515px;width:13px;height:14px;box-sizing:border-box;border:1px solid #e2e1d6;border-radius:2px;background:#f3f2ea;"></div>
<svg class="a" style="left:893px;top:515px" width="13" height="14" viewBox="0 0 13 14"><path d="M3 5.500 L6.500 9 L10 5.500" fill="none" stroke="#c9c7ba" stroke-width="2"/></svg>
<div class="a" style="left:671px;top:530px;width:236px;height:1px;background:#8e8e8e;"></div>
<svg class="a" style="left:708px;top:531px" width="200" height="15" viewBox="708 531 200 15">
<g fill="none" stroke="#4a4a4a" stroke-width="1.300"><rect x="714.500" y="535.500" width="9" height="5" rx="2.500"/><rect x="722" y="535.500" width="9" height="5" rx="2.500"/></g>
<text x="743" y="543" font-family="Liberation Serif, serif" font-style="italic" font-weight="bold" font-size="14" fill="#222">fx</text><rect x="757.500" y="541.500" width="1.600" height="1.600" fill="#111"/>
<rect x="769.500" y="532.500" width="12.500" height="11.500" fill="#8a8a8a" stroke="#444"/><circle cx="775.800" cy="538.300" r="3.500" fill="#fff"/>
<circle cx="802" cy="538.200" r="5.500" fill="#fff" stroke="#3a3a3a" stroke-width="1.200"/><path d="M798.100 542.100 A5.500 5.500 0 0 1 805.900 534.300 Z" fill="#2a2a2a"/><rect x="810" y="541.500" width="1.600" height="1.600" fill="#111"/>
<path d="M822.500 543.500 V534.500 H826.500 L827.500 536 H832.500 V543.500 Z" fill="#ececec" stroke="#5a5a5a" stroke-width="1"/>
<rect x="849" y="534" width="9" height="9.500" fill="#f4f4f4" stroke="#555" stroke-width="1"/><path d="M852 543.500 V538 H858" fill="none" stroke="#333" stroke-width="1.400"/>
<path d="M876.500 536.500 H883.500 L882.800 544 H877.200 Z" fill="#e4e4e4" stroke="#333" stroke-width="1.100"/><path d="M875.500 535.500 H884.500 M878.500 534 H881.500 M879 538 V542.500 M881 538 V542.500" stroke="#333" stroke-width="1.100"/>
<path d="M905.500 535 L897 543.500 M905.500 538 L900 543.500 M905.500 541 L903 543.500" stroke="#b4b4b4" stroke-width="1"/>
</svg>
<!--LAYERS-->
<!--STATUS-->
</body>
</html>
